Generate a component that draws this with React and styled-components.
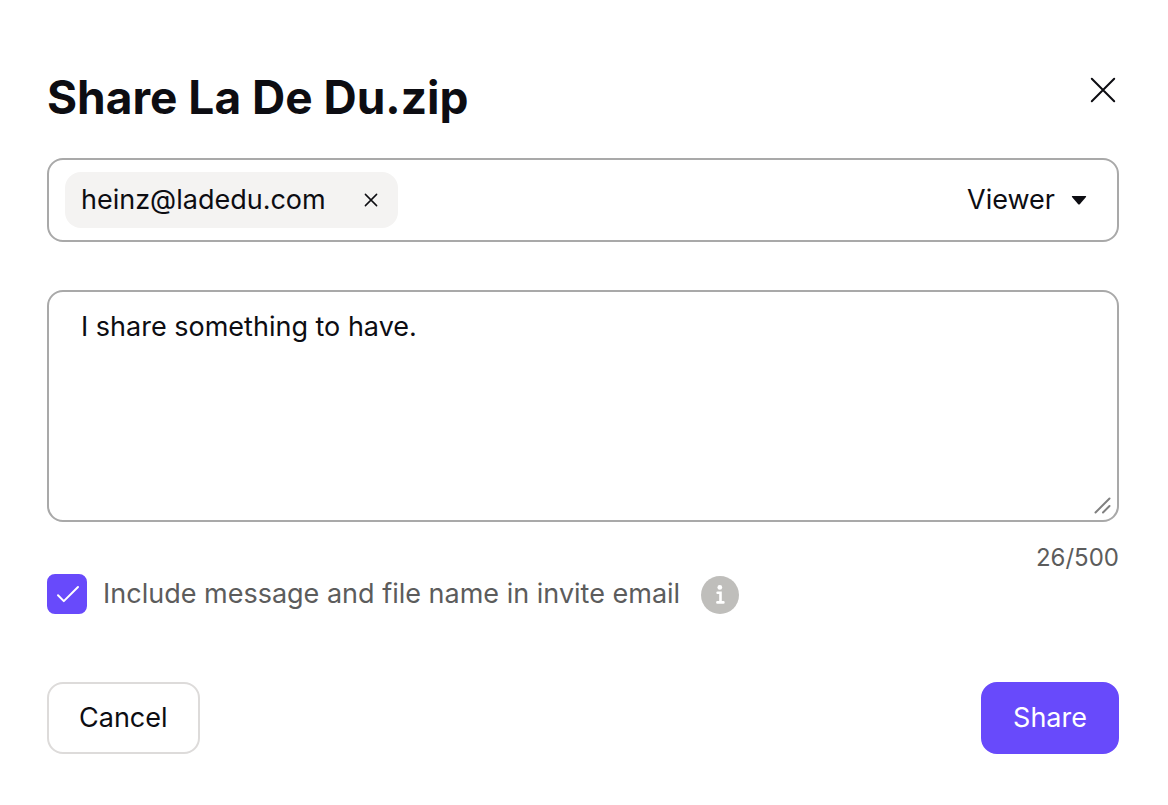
import React, { useState } from 'react'
import styled, { createGlobalStyle } from 'styled-components'

const GlobalStyle = createGlobalStyle`
    * {
        box-sizing: border-box;
    }
    body {
        margin: 0;
        background: #ffffff;
        color: #0d0d12;
        font-family: Inter, "Liberation Sans", sans-serif;
    }
    button, input, select, textarea {
        font: inherit;
        color: inherit;
    }
`

const Dialog = styled.form`
    padding: 74px 49px 48px 47px;
    font-size: 27px;
    line-height: 40px;
`

const Header = styled.header`
    display: flex;
    justify-content: space-between;
    align-items: flex-start;
    margin-bottom: 38px;
`

const Title = styled.h1`
    margin: 0;
    font-size: 46px;
    line-height: 46px;
    font-weight: 700;
`

const IconButton = styled.button`
    display: grid;
    place-items: center;
    width: ${props => props.$size};
    height: ${props => props.$size};
    padding: 0;
    border: none;
    background: none;
    cursor: pointer;
`

const Recipients = styled.div`
    display: flex;
    align-items: center;
    justify-content: space-between;
    height: 84px;
    margin-bottom: 48px;
    padding: 0 30px 0 16px;
    border: 2px solid #a9a9a9;
    border-radius: 16px;
`

const Chip = styled.span`
    display: flex;
    align-items: center;
    gap: 34px;
    height: 56px;
    padding: 0 16px;
    border-radius: 16px;
    background: #f4f3f2;
`

const RoleField = styled.label`
    display: flex;
    align-items: center;
    gap: 16px;
`

const RoleSelect = styled.select`
    appearance: none;
    field-sizing: content;
    padding: 0;
    border: none;
    background: none;
`

const MessageBox = styled.div`
    display: flex;
    align-items: flex-end;
    height: 232px;
    margin-bottom: 20px;
    padding: 15px 5px 5px 32px;
    border: 2px solid #a9a9a9;
    border-radius: 16px;
`

const Message = styled.textarea`
    flex: 1;
    height: 100%;
    padding: 0;
    border: none;
    outline: none;
    resize: none;
    background: none;
`

const Counter = styled.div`
    color: #5c5c5c;
    font-size: 24px;
    line-height: 32px;
    text-align: right;
`

const Options = styled.div`
    display: flex;
    align-items: center;
    gap: 21px;
    margin-bottom: 68px;
    color: #5c5c5c;
`

const CheckLabel = styled.label`
    display: flex;
    align-items: center;
    gap: 16px;
`

const CheckWrap = styled.span`
    display: grid;
    width: 40px;
    height: 40px;

    > * {
        grid-area: 1 / 1;
    }
    svg {
        pointer-events: none;
    }
`

const Checkbox = styled.input`
    appearance: none;
    width: 40px;
    height: 40px;
    margin: 0;
    border: 2px solid #a9a9a9;
    border-radius: 8px;
    &:checked {
        border-color: #684afb;
        background: #684afb;
    }
`

const Footer = styled.footer`
    display: flex;
    justify-content: space-between;
`

const Button = styled.button`
    height: 72px;
    padding: 0 30px;
    border: 2px solid ${props => props.$primary ? '#684afb' : '#dddbda'};
    border-radius: 16px;
    background: ${props => props.$primary ? '#684afb' : '#ffffff'};
    color: ${props => props.$primary ? '#ffffff' : '#0d0d12'};
    cursor: pointer;
`

const Cross = ({ size, inset, stroke }) => (
    <svg width={size} height={size} viewBox={`0 0 ${size} ${size}`} fill="none" stroke="currentColor" strokeWidth={stroke} strokeLinecap="round">
        <path d={`M${inset} ${inset} ${size - inset} ${size - inset}M${size - inset} ${inset} ${inset} ${size - inset}`} />
    </svg>
)

const App = () => {
    const [emails, setEmails] = useState(['heinz@ladedu.com'])
    const [message, setMessage] = useState('I share something to have.')
    const [include, setInclude] = useState(true)

    return (
        <>
            <GlobalStyle />
            <Dialog onSubmit={e => e.preventDefault()}>
                <Header>
                    <Title>Share La De Du.zip</Title>
                    <IconButton type="button" $size="32px" aria-label="Close">
                        <Cross size={26} inset={1.8} stroke={2} />
                    </IconButton>
                </Header>

                <Recipients>
                    <div>
                        {emails.map(email => (
                            <Chip key={email}>
                                {email}
                                <IconButton type="button" $size="22px" aria-label="Remove" onClick={() => setEmails(emails.filter(e => e !== email))}>
                                    <Cross size={14} inset={1.4} stroke={1.5} />
                                </IconButton>
                            </Chip>
                        ))}
                    </div>
                    <RoleField>
                        <RoleSelect aria-label="Role">
                            <option>Viewer</option>
                            <option>Editor</option>
                        </RoleSelect>
                        <svg width="16" height="9" viewBox="0 0 16 9">
                            <path d="M1.4 0h13.2q1 0 .4 1L9 8q-1 1-2 0L1 1Q.4 0 1.4 0z" fill="currentColor" />
                        </svg>
                    </RoleField>
                </Recipients>

                <MessageBox>
                    <Message aria-label="Message" maxLength={500} value={message} onChange={e => setMessage(e.target.value)} />
                    <svg width="18" height="18" viewBox="0 0 18 18" fill="none" stroke="#808080" strokeWidth="2" strokeLinecap="round">
                        <path d="M1.5 15.5l14-14M9 15.5l6.5-6.5" />
                    </svg>
                </MessageBox>
                <Counter>{message.length}/500</Counter>

                <Options>
                    <CheckLabel>
                        <CheckWrap>
                            <Checkbox type="checkbox" checked={include} onChange={e => setInclude(e.target.checked)} />
                            <svg width="40" height="40" viewBox="0 0 40 40" fill="none" stroke="#ffffff" strokeWidth="2" strokeLinecap="round" strokeLinejoin="round">
                                <path d="M11 21.3l5.8 5.8L31 13" />
                            </svg>
                        </CheckWrap>
                        Include message and file name in invite email
                    </CheckLabel>
                    <svg width="38" height="40" viewBox="0 0 38 40">
                        <circle cx="19" cy="21" r="19" fill="#bfbebb" />
                        <circle cx="18.8" cy="13.4" r="2.4" fill="#ffffff" />
                        <path d="M16.6 18.8h2.9v9.4M16.4 28.4h6" fill="none" stroke="#ffffff" strokeWidth="2.6" strokeLinecap="round" />
                    </svg>
                </Options>

                <Footer>
                    <Button type="button">Cancel</Button>
                    <Button type="submit" $primary>Share</Button>
                </Footer>
            </Dialog>
        </>
    )
}

export default App
